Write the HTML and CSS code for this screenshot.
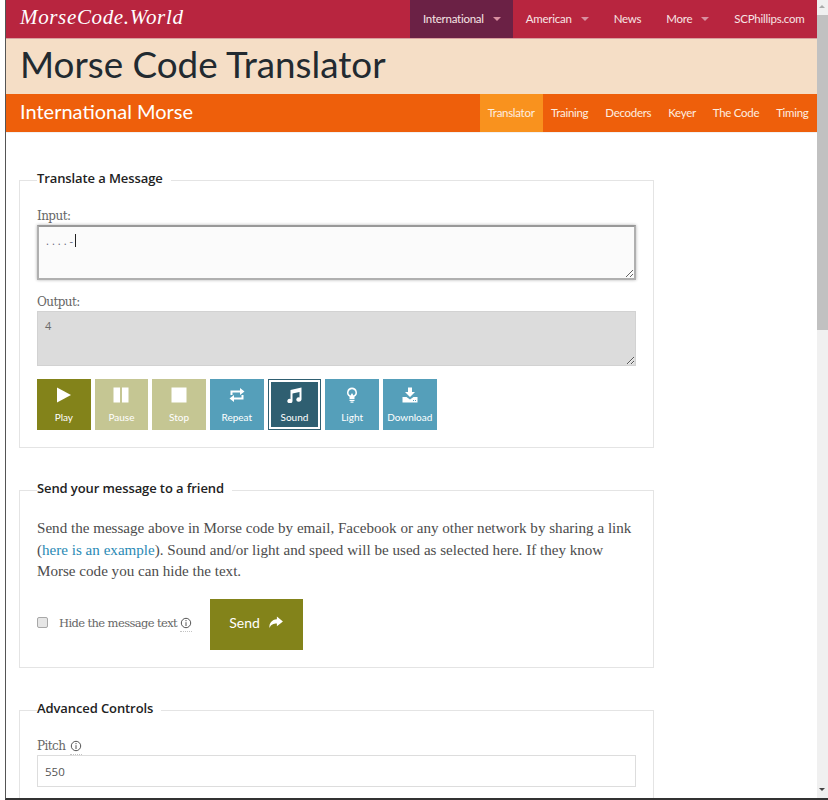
FILE: index.html
```html
<!DOCTYPE html>
<html lang="en">
<head>
<meta charset="utf-8">
<title>Morse Code Translator</title>
<link rel="stylesheet" href="styles.css">
</head>
<body>
<div class="window">
  <div class="page">
    <header class="topbar">
      <a class="logo">MorseCode.World</a>
      <nav class="topnav">
        <a class="topitem active">International<i class="caret"></i></a>
        <a class="topitem">American<i class="caret"></i></a>
        <a class="topitem">News</a>
        <a class="topitem">More<i class="caret"></i></a>
        <a class="topitem">SCPhillips.com</a>
      </nav>
    </header>
    <div class="titleband"><h1>Morse Code Translator</h1></div>
    <div class="subbar">
      <div class="subtitle">International Morse</div>
      <nav class="subnav">
        <a class="subitem current">Translator</a>
        <a class="subitem">Training</a>
        <a class="subitem">Decoders</a>
        <a class="subitem">Keyer</a>
        <a class="subitem">The Code</a>
        <a class="subitem">Timing</a>
      </nav>
    </div>
    <main class="content">
      <fieldset class="panel">
        <legend>Translate a Message</legend>
        <label class="lbl">Input:</label>
        <div class="inputwrap">
          <textarea class="ta ta-input" spellcheck="false">....-</textarea>
          <span class="textcaret"></span>
        </div>
        <label class="lbl lbl-out">Output:</label>
        <textarea class="ta ta-output" readonly>4</textarea>
        <div class="buttons">
          <a class="btn olive">
            <svg class="ic" viewBox="0 0 16 16"><path d="M1 0.500L15 8L1 15.500Z"/></svg>Play</a>
          <a class="btn olive-off">
            <svg class="ic" viewBox="0 0 16 16"><rect x="0.500" y="0.500" width="6.500" height="15"/><rect x="9" y="0.500" width="6.500" height="15"/></svg>Pause</a>
          <a class="btn olive-off">
            <svg class="ic" viewBox="0 0 16 16"><rect x="0.500" y="0.500" width="15" height="15"/></svg>Stop</a>
          <a class="btn blue">
            <svg class="ic" viewBox="0 0 16 16"><path d="M1.500 8V3.500H11V1L15.500 4.500L11 8V5.500H3.500V8Z"/><path d="M14.500 8V12.500H5V15L0.500 11.500L5 8V10.500H12.500V8Z"/></svg>Repeat</a>
          <a class="btn dark">
            <svg class="ic" viewBox="0 0 16 16"><path d="M4.500 3L15.500 0.500V12.500A2.600 2.200 0 1 1 13.500 10.400V5L6.500 6.500V14A2.600 2.200 0 1 1 4.500 11.900Z"/></svg>Sound</a>
          <a class="btn blue">
            <svg class="ic" viewBox="0 0 16 16"><path fill-rule="evenodd" d="M8 0.500A5 5 0 0 1 10.500 9.800V12H5.500V9.800A5 5 0 0 1 8 0.500ZM8 2.200A3.300 3.300 0 0 0 6.500 8.500L8 6L9.500 8.500A3.300 3.300 0 0 0 8 2.200Z"/><rect x="5.500" y="12.800" width="5" height="1.200"/><rect x="6.500" y="14.500" width="3" height="1.200"/></svg>Light</a>
          <a class="btn blue">
            <svg class="ic" viewBox="0 0 16 16"><path d="M6 0.500H10V5H13L8 10L3 5H6Z"/><path fill-rule="evenodd" d="M0.500 10H4.500L8 12.500L11.500 10H15.500V15.500H0.500ZM11 13V14H12V13ZM13 13V14H14V13Z"/></svg>Download</a>
        </div>
      </fieldset>

      <fieldset class="panel panel-send">
        <legend>Send your message to a friend</legend>
        <p class="para">Send the message above in Morse code by email, Facebook or any other network by sharing a link (<a class="link">here is an example</a>). Sound and/or light and speed will be used as selected here. If they know Morse code you can hide the text.</p>
        <div class="sendrow">
          <label class="check"><input type="checkbox" class="cb"><span>Hide the message text</span>
            <span class="tip"><svg class="info" viewBox="0 0 12 12"><circle cx="6" cy="6" r="4.700"/><path d="M6 5.200V9M6 3v1.200"/></svg></span>
          </label>
          <a class="send">Send
            <svg class="sendic" viewBox="0 0 16 14"><path d="M9.500 0.500L16 6L9.500 11V8C6 8 3 9 1.500 13C1 7.500 4 4 9.500 3.500Z"/></svg>
          </a>
        </div>
      </fieldset>

      <fieldset class="panel panel-adv">
        <legend>Advanced Controls</legend>
        <label class="lbl lbl-pitch">Pitch
          <span class="tip"><svg class="info" viewBox="0 0 12 12"><circle cx="6" cy="6" r="4.700"/><path d="M6 5.200V9M6 3v1.200"/></svg></span>
        </label>
        <input class="field" type="text" value="550">
      </fieldset>
    </main>
  </div>
  <div class="scrollbar">
    <span class="arrow up"></span>
    <span class="thumb"></span>
    <span class="arrow down"></span>
  </div>
</div>
</body>
</html>
```
FILE: styles.css
```css
* { box-sizing: border-box; }
html, body { margin: 0; height: 800px; overflow: hidden; background: #fff; }
body { padding-left: 5px; font-family: "Liberation Serif", serif; color: #555; }
.window { height: 800px; border-left: 1px solid #555; border-bottom: 2px solid #333; display: flex; overflow: hidden; }
.page { width: 811px; flex: none; overflow: hidden; }

.topbar { height: 39px; background: #b8253f; border-bottom: 1px solid #d9a0a0; display: flex; justify-content: space-between; }
.logo { font: italic 21px "Liberation Serif", serif; color: #fff; padding: 5px 0 0 14px; letter-spacing: 0.65px; }
.topnav { display: flex; }
.topitem { display: flex; align-items: center; padding: 0 12.500px 2px; height: 38px; font: 11.500px Lato, sans-serif; letter-spacing: -0.25px; color: #f7e4e4; }
.topitem.active { background: #6b2145; }
.caret { width: 0; height: 0; margin-left: 9px; margin-top: 2px; border: 4px solid transparent; border-top: 4px solid #d98fa0; border-bottom: 0; }

.titleband { height: 55px; background: #f5dec6; padding-left: 14px; }
h1 { margin: 0; font: 400 36.800px/51px Lato, sans-serif; color: #222a30; }

.subbar { height: 39px; background: #ee5f0b; display: flex; justify-content: space-between; align-items: stretch; border-bottom: 1px solid #f1f1f1; }
.subtitle { font: 20px/34px Lato, sans-serif; color: #fff; padding-left: 14px; }
.subnav { display: flex; }
.subitem { padding: 0 8.500px; height: 38px; font: 11.500px/37px Lato, sans-serif; letter-spacing: -0.3px; color: #fdeee0; }
.subitem.current { background: #f9921e; padding: 0 8px; }

.content { padding: 35px 0 0 13px; }
.panel { margin: 0 0 30px; width: 635px; height: 280px; border: 1.500px solid #e4e4e4; padding: 0 16px 0 17px; }
legend { padding: 0 8px 4px 0; font: 600 13px/20px "Open Sans", sans-serif; color: #222; letter-spacing: -0.1px; }
.lbl { display: block; margin-top: 15px; font: 12px/18px "DejaVu Serif", serif; color: #666; letter-spacing: -0.55px; }
.lbl-out { margin-top: 13px; }
.inputwrap { position: relative; height: 55px; }
.ta { display: block; width: 599px; height: 55px; padding: 6px 7px; border: 1px solid #ccc; outline: 0; font: 11px "Open Sans", sans-serif; color: #6a6a6a; resize: vertical; }
.ta-input { background: #fbfbfb; border: 2px solid #b0b0b0; border-top-color: #999; box-shadow: 0 0 3px rgba(0,0,0,.3); color: #667; letter-spacing: 3px; }
.ta-output { background: #dcdcdc; border: 1px solid #d2d2d2; }
.textcaret { position: absolute; left: 38px; top: 9px; width: 1px; height: 13px; background: #222; }

.buttons { display: flex; gap: 4px; margin-top: 13px; }
.btn { width: 53.670px; height: 51px; display: flex; flex-direction: column; align-items: center; padding-top: 8px; font: 10px/12px Lato, sans-serif; color: #fff; }
.ic { width: 16px; height: 16px; fill: #fff; margin-bottom: 8px; flex: none; }
.olive { background: #83831a; }
.olive-off { background: #c5c693; }
.blue { background: #559fba; }
.dark { background: #2f5f71; border: 3px solid #fff; outline: 1px solid #2f5f71; outline-offset: -1px; padding-top: 5px; }

.panel-send { height: 190px; }
.para { margin: 16px 0 0; font: 15.100px/21.500px "Liberation Serif", serif; color: #4c4c4c; }
.link { color: #2a8ab5; }
.sendrow { display: flex; align-items: center; margin-top: 16.500px; }
.check { display: flex; align-items: center; font: 11.500px "DejaVu Serif", serif; letter-spacing: -0.6px; color: #666; width: 172.500px; padding-bottom: 4px; }
.cb { appearance: none; margin: 0 11px 0 0; width: 11px; height: 11px; background: #e6e6e6; border: 1px solid #a8a8a8; border-radius: 2px; }
.tip { display: inline-flex; margin-left: 3px; padding-bottom: 2px; margin-top: 3px; border-bottom: 1px dotted #c4c4c4; }
.info { width: 12px; height: 12px; fill: none; stroke: #555; stroke-width: 1; }
.send { display: flex; align-items: center; justify-content: center; gap: 8px; width: 93px; height: 51px; padding-bottom: 4px; background: #83831a; color: #fff; font: 14px Lato, sans-serif; }
.sendic { width: 15px; height: 13px; fill: #fff; }

.panel-adv { height: 200px; }
.lbl-pitch { display: flex; align-items: center; }
.lbl-pitch .tip { margin-left: 5px; }
.field { display: block; width: 599px; height: 32px; border: 1.500px solid #ddd; padding: 0 7px; font: 11.500px "Open Sans", sans-serif; color: #555; outline: 0; }

.scrollbar { width: 11px; flex: none; background: #f0f0f0; display: flex; flex-direction: column; }
.arrow { height: 15px; flex: none; background: #f0f0f0; position: relative; }
.arrow::after { content: ""; position: absolute; left: 2px; top: 5px; border: 3.500px solid transparent; }
.arrow.up::after { border-bottom-color: #aaa; border-top: 0; }
.arrow.down { margin-top: auto; }
.arrow.down::after { border-top-color: #444; border-bottom: 0; }
.thumb { height: 315px; background: #c1c1c1; }
```
